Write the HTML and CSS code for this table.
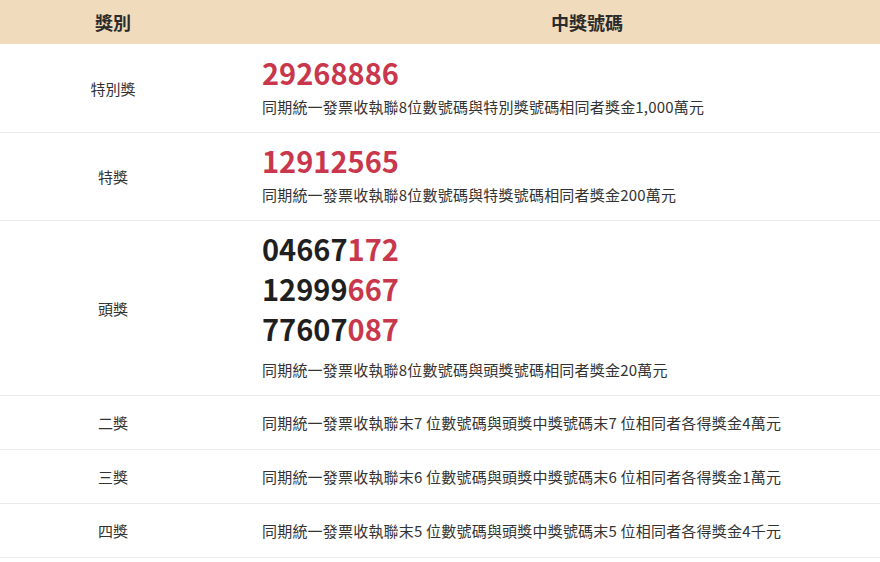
FILE: index.html
```html
<!DOCTYPE html>
<html lang="zh-Hant">
<head>
<meta charset="utf-8">
<title>統一發票中獎號碼</title>
<link rel="stylesheet" href="styles.css">
</head>
<body>
<div class="wrap">
<table class="prize-table">
  <thead>
    <tr>
      <th class="col-name">獎別</th>
      <th class="col-num">中獎號碼</th>
    </tr>
  </thead>
  <tbody>
    <tr>
      <td class="name">特別獎</td>
      <td class="info">
        <div class="nums"><div class="num red">29268886</div></div>
        <div class="desc">同期統一發票收執聯8位數號碼與特別獎號碼相同者獎金1,000萬元</div>
      </td>
    </tr>
    <tr>
      <td class="name">特獎</td>
      <td class="info">
        <div class="nums"><div class="num red">12912565</div></div>
        <div class="desc">同期統一發票收執聯8位數號碼與特獎號碼相同者獎金200萬元</div>
      </td>
    </tr>
    <tr>
      <td class="name">頭獎</td>
      <td class="info">
        <div class="nums multi">
          <div class="num">04667<span class="red">172</span></div>
          <div class="num">12999<span class="red">667</span></div>
          <div class="num">77607<span class="red">087</span></div>
        </div>
        <div class="desc">同期統一發票收執聯8位數號碼與頭獎號碼相同者獎金20萬元</div>
      </td>
    </tr>
    <tr class="short">
      <td class="name">二獎</td>
      <td class="info"><div class="desc">同期統一發票收執聯末7 位數號碼與頭獎中獎號碼末7 位相同者各得獎金4萬元</div></td>
    </tr>
    <tr class="short">
      <td class="name">三獎</td>
      <td class="info"><div class="desc">同期統一發票收執聯末6 位數號碼與頭獎中獎號碼末6 位相同者各得獎金1萬元</div></td>
    </tr>
    <tr class="short">
      <td class="name">四獎</td>
      <td class="info"><div class="desc">同期統一發票收執聯末5 位數號碼與頭獎中獎號碼末5 位相同者各得獎金4千元</div></td>
    </tr>
  </tbody>
</table>
</div>
</body>
</html>
```
FILE: styles.css
```css
html, body {
  margin: 0;
  padding: 0;
  background: #ffffff;
}
body {
  font-family: "Noto Sans CJK TC", "Noto Sans", sans-serif;
  color: #333333;
  overflow: hidden;
}
.wrap {
  width: 880px;
  overflow: hidden;
}
.prize-table {
  width: 948px;
  border-collapse: collapse;
  table-layout: fixed;
}
.prize-table th {
  background: #f0dcbd;
  height: 44px;
  padding: 0;
  font-size: 18px;
  font-weight: 700;
  color: #2b2b2b;
  text-align: center;
  vertical-align: middle;
}
.col-name {
  width: 226px;
}
.prize-table td {
  border-bottom: 1px solid #ebebeb;
  vertical-align: middle;
}
.name {
  text-align: center;
  font-size: 15px;
  color: #333333;
  padding: 0;
}
.info {
  padding: 8px 0 11px 36px;
}
.tbody-fix {}
.prize-table tbody tr + tr .info {
  padding-top: 7px;
}
.prize-table tbody tr.short .info {
  padding: 12px 0 12px 36px;
}
.num {
  font-size: 29px;
  font-weight: 700;
  line-height: 40px;
  color: #1f1f1f;
}
.nums.multi {
  margin-bottom: 7px;
}
.red {
  color: #c9374d;
}
.desc {
  font-size: 15px;
  line-height: 29px;
  letter-spacing: 0.2px;
  color: #333333;
  white-space: nowrap;
}
```
